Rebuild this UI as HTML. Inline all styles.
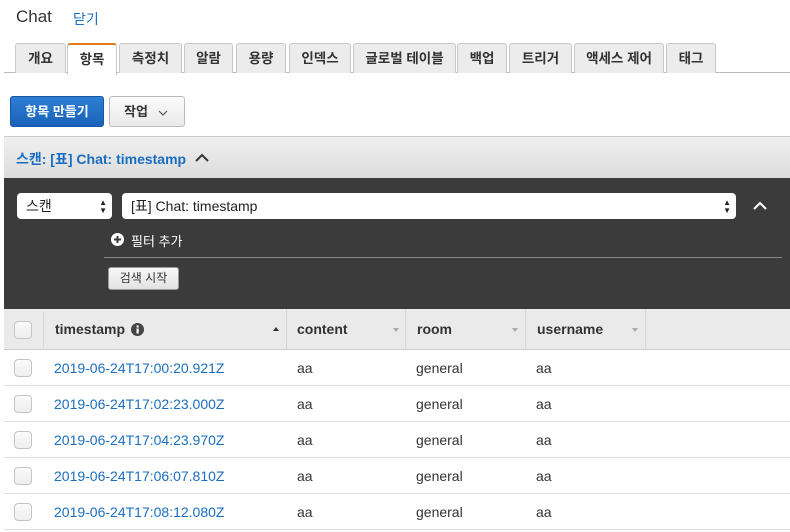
<!DOCTYPE html>
<html><head><meta charset="utf-8"><style>
*{box-sizing:border-box;margin:0;padding:0}
body{width:790px;height:532px;overflow:hidden;background:#fff;font-family:"Liberation Sans","Noto Sans CJK KR",sans-serif;position:relative;color:#333}
.a{position:absolute}
.tab{position:absolute;top:43px;height:30px;background:#ececec;border:1px solid #c8c8c8;border-bottom:none;border-radius:3px 3px 0 0;font-size:13.5px;font-weight:bold;color:#333;text-align:center;line-height:30px}
.tab.on{background:#fff;border-top:2px solid #e07a1f;height:32px;line-height:30px;z-index:2}
.cb{position:absolute;width:18px;height:18px;border:1px solid #c5c5c5;border-radius:4px;background:linear-gradient(#fafafa,#eee)}
.row{position:absolute;left:4px;width:786px;height:36px;border-bottom:1px solid #ddd;font-size:14px}
.row span{position:absolute;top:10px}
.th{position:absolute;top:309px;height:41px;border-right:1px solid #d5d5d5;font-size:14px;font-weight:bold;color:#333;line-height:41px}
.tri{position:absolute;top:19px;width:0;height:0;border-left:3px solid transparent;border-right:3px solid transparent;border-top:4px solid #aaa}
</style></head><body>
<div class="a" style="left:16px;top:7px;font-size:17px;color:#333">Chat</div>
<div class="a" style="left:73px;top:9px;font-size:14px;color:#1a6ec0">닫기</div>

<div class="a" style="left:4px;top:72px;width:786px;height:1px;background:#bbb"></div>
<div class="tab" style="left:15px;width:51px">개요</div>
<div class="tab on" style="left:67px;width:50px">항목</div>
<div class="tab" style="left:119px;width:63px">측정치</div>
<div class="tab" style="left:184px;width:49px">알람</div>
<div class="tab" style="left:236px;width:50px">용량</div>
<div class="tab" style="left:289px;width:62px">인덱스</div>
<div class="tab" style="left:353px;width:103px">글로벌 테이블</div>
<div class="tab" style="left:457px;width:50px">백업</div>
<div class="tab" style="left:509px;width:63px">트리거</div>
<div class="tab" style="left:574px;width:90px">액세스 제어</div>
<div class="tab" style="left:666px;width:50px">태그</div>

<div class="a" style="left:10px;top:96px;width:94px;height:31px;border-radius:3px;background:linear-gradient(#2d7fd4,#1a62b8);border:1px solid #1558a8;color:#fff;font-size:13px;font-weight:bold;text-align:center;line-height:29px">항목 만들기</div>
<div class="a" style="left:109px;top:96px;width:76px;height:31px;border-radius:3px;background:linear-gradient(#fbfbfb,#e9e9e9);border:1px solid #bbb;color:#333;font-size:13px;font-weight:bold;line-height:29px;padding-left:14px">작업 <svg width="10" height="6" style="margin-left:6px;vertical-align:middle"><path d="M1 1l4 4 4-4" fill="none" stroke="#555" stroke-width="1.2"/></svg></div>

<div class="a" style="left:4px;top:136px;width:786px;height:42px;background:linear-gradient(#f0f0f0,#dcdcdc);border-top:1px solid #ccc"></div>
<div class="a" style="left:16px;top:149px;font-size:14px;font-weight:bold;color:#1a6ec0">스캔: [표] Chat: timestamp</div>
<svg class="a" style="left:194px;top:153px" width="16" height="10"><path d="M2 8l6-6 6 6" fill="none" stroke="#333" stroke-width="2"/></svg>

<div class="a" style="left:4px;top:178px;width:786px;height:131px;background:#3b3b3b"></div>
<div class="a" style="left:17px;top:193px;width:95px;height:26px;background:#fff;border-radius:4px;font-size:14px;line-height:26px;padding-left:9px;color:#222">스캔<span style="position:absolute;right:5px;top:6px;font-size:8px;line-height:8px">▲<br>▼</span></div>
<div class="a" style="left:122px;top:193px;width:614px;height:26px;background:#fff;border-radius:4px;font-size:14px;line-height:26px;padding-left:9px;color:#222">[표] Chat: timestamp<span style="position:absolute;right:5px;top:6px;font-size:8px;line-height:8px">▲<br>▼</span></div>
<svg class="a" style="left:752px;top:201px" width="16" height="10"><path d="M2 8l6-6 6 6" fill="none" stroke="#fff" stroke-width="2"/></svg>
<svg class="a" style="left:111px;top:233px" width="13" height="13"><circle cx="6.5" cy="6.5" r="6.5" fill="#fff"/><path d="M6.5 3v7M3 6.5h7" stroke="#3b3b3b" stroke-width="2"/></svg>
<div class="a" style="left:131px;top:231px;font-size:13px;color:#fff">필터 추가</div>
<div class="a" style="left:104px;top:257px;width:678px;height:1px;background:#888"></div>
<div class="a" style="left:108px;top:267px;width:71px;height:23px;background:linear-gradient(#f8f8f8,#e2e2e2);border:1px solid #999;border-radius:3px;font-size:12px;text-align:center;line-height:21px;color:#333">검색 시작</div>

<div class="a" style="left:4px;top:309px;width:786px;height:41px;background:#eaeaea;border-bottom:1px solid #ccc"></div>
<div class="cb" style="left:14px;top:321px"></div>
<div class="a" style="left:43px;top:312px;width:1px;height:35px;background:#d5d5d5"></div>
<div class="th" style="left:44px;width:243px;padding-left:11px">timestamp <svg width="13" height="13" style="vertical-align:-2px;margin-left:2px"><circle cx="6.5" cy="6.5" r="6.5" fill="#444"/><rect x="5.5" y="5.5" width="2.2" height="5" fill="#fff"/><circle cx="6.6" cy="3.5" r="1.2" fill="#fff"/></svg><span style="position:absolute;left:229px;top:18px;border-left:3px solid transparent;border-right:3px solid transparent;border-bottom:4px solid #333;width:0;height:0"></span></div>
<div class="th" style="left:287px;width:119px;padding-left:10px">content<span class="tri" style="left:106px"></span></div>
<div class="th" style="left:406px;width:120px;padding-left:11px">room<span class="tri" style="left:106px"></span></div>
<div class="th" style="left:526px;width:120px;padding-left:11px">username<span class="tri" style="left:106px"></span></div>

<div class="row" style="top:350px"><div class="cb" style="left:10px;top:9px"></div><span style="left:50px;color:#1a6ec0">2019-06-24T17:00:20.921Z</span><span style="left:293px">aa</span><span style="left:412px">general</span><span style="left:532px">aa</span></div>
<div class="row" style="top:386px"><div class="cb" style="left:10px;top:9px"></div><span style="left:50px;color:#1a6ec0">2019-06-24T17:02:23.000Z</span><span style="left:293px">aa</span><span style="left:412px">general</span><span style="left:532px">aa</span></div>
<div class="row" style="top:422px"><div class="cb" style="left:10px;top:9px"></div><span style="left:50px;color:#1a6ec0">2019-06-24T17:04:23.970Z</span><span style="left:293px">aa</span><span style="left:412px">general</span><span style="left:532px">aa</span></div>
<div class="row" style="top:458px"><div class="cb" style="left:10px;top:9px"></div><span style="left:50px;color:#1a6ec0">2019-06-24T17:06:07.810Z</span><span style="left:293px">aa</span><span style="left:412px">general</span><span style="left:532px">aa</span></div>
<div class="row" style="top:494px"><div class="cb" style="left:10px;top:9px"></div><span style="left:50px;color:#1a6ec0">2019-06-24T17:08:12.080Z</span><span style="left:293px">aa</span><span style="left:412px">general</span><span style="left:532px">aa</span></div>
</body></html>
